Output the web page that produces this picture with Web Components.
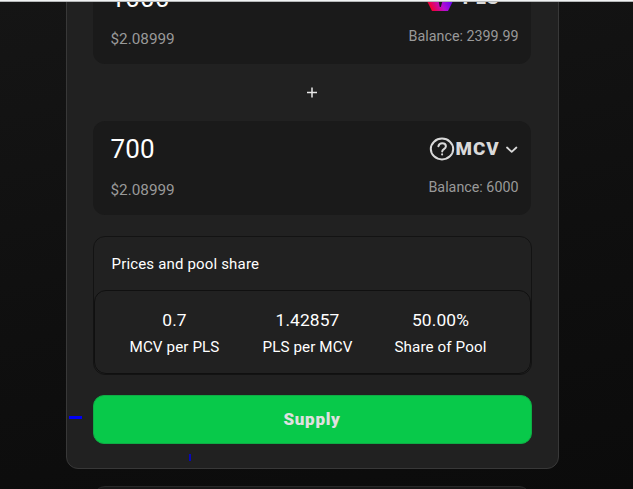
<!DOCTYPE html>
<html lang="en">
<head>
<meta charset="utf-8">
<title>Add liquidity</title>
<style>
  html, body { margin: 0; height: 100%; overflow: hidden; background: #0d0d0d; }
  body { font-family: Roboto, "Liberation Sans", sans-serif; color: #fff; }
  .pls { margin: 0 9px 0 0; }
</style>
</head>
<body>
<pool-page>
  <liquidity-card>
    <token-input amount="1000" value="$2.08999" symbol="PLS" balance="2399.99">
      <svg slot="icon" class="pls" width="28" height="26" viewBox="0 0 28 26">
        <defs>
          <linearGradient id="pls" x1="0" y1="1" x2="1" y2="0.5">
            <stop offset="0" stop-color="#ff0000"/>
            <stop offset="0.2" stop-color="#f00038"/>
            <stop offset="0.55" stop-color="#b80fd0"/>
            <stop offset="1" stop-color="#4a00ff"/>
          </linearGradient>
        </defs>
        <path d="M6 2h16l6 12-6 12H6L0 14z" fill="url(#pls)"/>
        <path d="M12.4 15h4.4l-2 7h-1z" fill="#1a1a1a"/>
      </svg>
    </token-input>
    <plus-divider></plus-divider>
    <token-input amount="700" value="$2.08999" symbol="MCV" balance="6000">
      <svg slot="icon" width="26" height="24" viewBox="0 0 26 24" fill="none" stroke="#d9d9d9" stroke-width="2" stroke-linecap="round">
        <ellipse cx="13" cy="12" rx="11.2" ry="10.4"/>
        <path d="M9.4 9.2c.5-1.9 2-2.9 3.8-2.9 2.1 0 3.7 1.2 3.7 3 0 2.8-3.7 2.8-3.7 5.2"/>
        <path d="M13.1 17.3v.1"/>
      </svg>
    </token-input>
    <pool-share heading="Prices and pool share">
      <pool-stat value="0.7" label="MCV per PLS"></pool-stat>
      <pool-stat value="1.42857" label="PLS per MCV"></pool-stat>
      <pool-stat value="50.00%" label="Share of Pool"></pool-stat>
    </pool-share>
    <supply-button>Supply</supply-button>
  </liquidity-card>
</pool-page>

<script>
class BaseElement extends HTMLElement {
  constructor() {
    super();
    this.attachShadow({ mode: 'open' });
  }

  connectedCallback() {
    this.shadowRoot.innerHTML = this.render();
  }

  attr(name) {
    return this.getAttribute(name) || '';
  }
}

class PoolPage extends BaseElement {
  render() {
    return `
      <style>
        :host {
          display: flex; flex-direction: column; align-items: center;
          box-sizing: border-box; height: 489px; overflow: hidden;
          background: linear-gradient(168deg, #151515 0%, #0f0f0f 55%, #0b0b0b 100%);
        }
        .topbar { position: relative; z-index: 1; flex: none; align-self: stretch; height: 2px; background: linear-gradient(#f1f3f4 50%, #b5b7b8 50%); }
        .next { flex: none; box-sizing: border-box; width: 438px; height: 40px; margin: 17px 9px 0 0; border: 1px solid #292929; border-radius: 12px; background: #181818; }
        /* drag handles */
        .mark { position: absolute; background: #0000f5; }
        .left { left: 69px; top: 416px; width: 13px; height: 3px; }
        .bottom { left: 189px; top: 454px; width: 2px; height: 7px; background: #0808b8; }
      </style>
      <div class="topbar"></div>
      <slot></slot>
      <div class="next"></div>
      <div class="mark left"></div>
      <div class="mark bottom"></div>
    `;
  }
}

class LiquidityCard extends BaseElement {
  render() {
    return `
      <style>
        :host {
          display: flex; flex-direction: column; flex: none;
          box-sizing: border-box; width: 493px; height: 527px;
          margin: -60px 9px 0 0; padding: 27px 26px 0;
          border: 1px solid #383838; border-radius: 12px;
          background: #212121;
        }
      </style>
      <slot></slot>
    `;
  }
}

class TokenInput extends BaseElement {
  render() {
    return `
      <style>
        :host {
          display: flex; justify-content: space-between; flex: none;
          box-sizing: border-box; width: 438px; height: 94px;
          padding: 12px 12px 0 18px; border-radius: 12px;
          background: #1a1a1a; color: #999; font-size: 14.3px; line-height: 18px;
        }
        .side { display: flex; flex-direction: column; }
        .right { align-items: flex-end; }
        .amount { color: #fff; font-size: 26px; line-height: 32px; letter-spacing: 0.2px; }
        .value { margin-top: 16px; font-size: 15.3px; }
        .token { display: flex; align-items: center; height: 32px; padding-right: 1px; color: #d9d9d9; }
        .symbol { font-size: 18.8px; font-weight: 900; line-height: 32px; letter-spacing: 0.9px; }
        .chevron { margin: 2px 0 0 5px; }
        .balance { margin-top: 13px; }
        ::slotted(svg) { display: block; margin-right: 1px; }
      </style>
      <div class="side">
        <div class="amount">${this.attr('amount')}</div>
        <div class="value">${this.attr('value')}</div>
      </div>
      <div class="side right">
        <div class="token">
          <slot name="icon"></slot>
          <span class="symbol">${this.attr('symbol')}</span>
          <svg class="chevron" width="13" height="8" viewBox="0 0 13 8" fill="none" stroke="#d9d9d9" stroke-width="1.8" stroke-linecap="round" stroke-linejoin="round">
            <path d="M2 1.5l4.7 4.3 4.7-4.3"/>
          </svg>
        </div>
        <div class="balance">Balance: ${this.attr('balance')}</div>
      </div>
    `;
  }
}

class PlusDivider extends BaseElement {
  render() {
    return `
      <style>
        :host { display: flex; flex: none; align-items: center; justify-content: center; height: 57px; }
        svg { display: block; }
      </style>
      <svg width="10" height="11" viewBox="0 0 10 11" stroke="#e8e8e8" stroke-width="1.5">
        <path d="M5 .5v10M0 5.5h10"/>
      </svg>
    `;
  }
}

class PoolShare extends BaseElement {
  render() {
    return `
      <style>
        :host {
          display: flex; flex-direction: column; flex: none;
          box-sizing: border-box; width: 439px; height: 139px; margin-top: 21px;
          border: 1px solid #131313; border-radius: 12px;
        }
        .heading { flex: 1; padding: 18px 18px 0; font-size: 15px; line-height: 18px; letter-spacing: 0.17px; }
        .stats {
          display: grid; grid-template-columns: repeat(3, 133px); justify-content: center;
          box-sizing: border-box; height: 84px; padding: 18px 9px 0 0;
          border: 1px solid #101010; border-radius: 12px;
        }
      </style>
      <div class="heading">${this.attr('heading')}</div>
      <div class="stats"><slot></slot></div>
    `;
  }
}

class PoolStat extends BaseElement {
  render() {
    return `
      <style>
        :host { display: flex; flex-direction: column; align-items: center; }
        .value { font-size: 17.4px; line-height: 22px; letter-spacing: 0.1px; }
        .label { margin-top: 7px; font-size: 15.2px; line-height: 18px; letter-spacing: 0.1px; }
      </style>
      <div class="value">${this.attr('value')}</div>
      <div class="label">${this.attr('label')}</div>
    `;
  }
}

class SupplyButton extends BaseElement {
  render() {
    return `
      <style>
        :host { display: block; flex: none; width: 439px; height: 49px; margin-top: 20px; }
        button {
          display: block; width: 100%; height: 100%; padding: 0;
          border: 1px solid #0fac45; border-radius: 11px; background: #08c94a;
          color: #e0e0e0; font: 900 17px/47px Roboto, "Liberation Sans", sans-serif;
          letter-spacing: 0.7px;
        }
      </style>
      <button type="button"><slot></slot></button>
    `;
  }
}

customElements.define('pool-page', PoolPage);
customElements.define('liquidity-card', LiquidityCard);
customElements.define('token-input', TokenInput);
customElements.define('plus-divider', PlusDivider);
customElements.define('pool-share', PoolShare);
customElements.define('pool-stat', PoolStat);
customElements.define('supply-button', SupplyButton);
</script>
</body>
</html>
